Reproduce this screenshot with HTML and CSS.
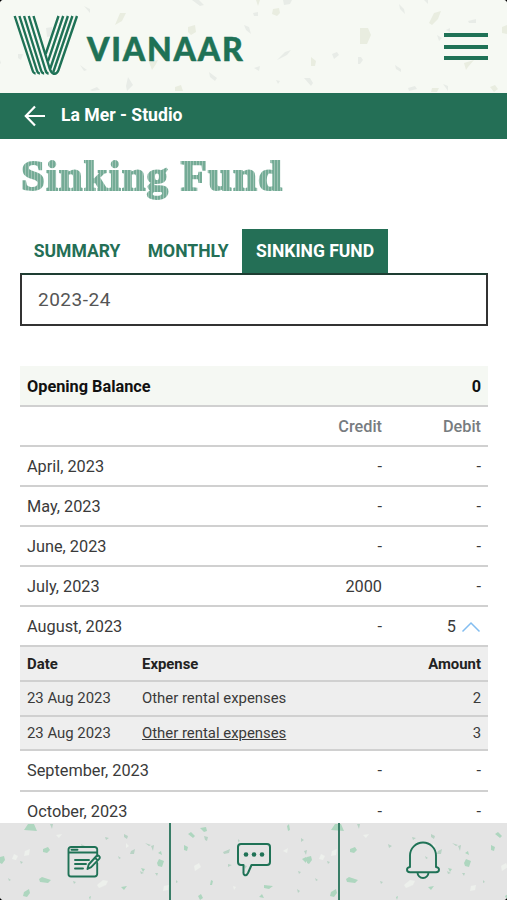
FILE: index.html
```
<!DOCTYPE html>
<html lang="en">
  <head>
    <meta charset="UTF-8">
    <meta name="viewport" content="width=device-width, initial-scale=1.0">
    <title>Vianaar - Sinking Fund</title>
    <link rel="stylesheet" href="styles.css">
  </head>
  <body>
    <div class="app">
      <header class="header">
        <svg class="speckles" width="507" height="93" viewBox="0 0 507 93">
          <g fill="#e9ede0">
            <path d="M120 13l6 0-4 8-7 4zM188 27l7-2 1 7-5 3-3-3zM149 62l9-2-2 4-4 6zM360 28h8l3 7-4 9h-7zM434 13l7-2-3 8-6 6-3-2zM464 63l10-3-6 7-2 3zM256 0h4l-2 6zM273 9l6-1 1 5-3 3-5-2zM311 57l5 4-1 5h-4zM175 87l6-2 2 6h-8zM432 88h7l-2 4h-6zM490 87l5-2 3 4-4 3zM502 27l5-2v9l-5-1z"/>
          </g>
          <g fill="#e8ece7">
            <path d="M84 6l6 3v4zM46 28l6-1v9l-5 1zM192 0h7l5 5-4 1zM244 25l5 2 2 7-5-4zM18 54l5 0-2 6-3-2zM80 65l7 5-3 1zM209 72l8 6-2 3-5-4zM90 90l7-3 3 3-8 1zM128 77l5 8-6 6-1-5zM123 50l5-1-1 5zM283 0h9l-2 4-6 1zM253 13l5-1v4h-4zM277 60l8-8 6-2-4 5zM332 54l5-2 2 3-5 4zM358 57h3l2 3-3 4h-2zM399 4l5 5 1 5-5-5zM424 0h4v4zM468 21l8-2v4h-7zM437 35l5 3-3 3zM446 30l4-2v4zM304 78h6l3 5-2 3zM276 80l4 1-2 3zM395 65l6 4v3l-5-3zM408 88l7-2 2 3-8 2zM443 84l5 2v5zM254 68l6-2-1 5zM0 60l1 3-1 1z"/>
          </g>
        </svg>
        <a class="brand" href="#">
          <svg class="brand-mark" width="66" height="62" viewBox="0 0 66 62" fill="none" stroke="#1f7256" stroke-width="2.4">
            <path d="M1.700 3L19.600 57.500q1 3 3 3M6.400 3l17.500 54.500q1 3 3 3M11.100 3l17 54.500q1 3 3 3M15.800 3l16.800 54.500q1 3 3 3M20.500 3L36.500 55q2 6 5.500 6"/>
            <path d="M45.500 3L32.700 41M50.200 3L35 48.300M54.900 3L37.300 55.500M59.400 3L40.300 59M64 3L45.500 57q-1.500 4-5 4"/>
          </svg>
          <span class="brand-name">VIANAAR</span>
        </a>
        <button class="menu-btn" aria-label="Menu">
          <span class="menu-line"></span>
          <span class="menu-line"></span>
          <span class="menu-line"></span>
        </button>
      </header>

      <div class="page-bar">
        <svg width="22" height="22" viewBox="0 0 22 22" fill="none" stroke="#fff" stroke-width="2.2">
          <path d="M21 11H2M11 1.500L1.800 11l9.200 9.500"/>
        </svg>
        <span class="page-bar__text">La Mer - Studio</span>
      </div>

      <main class="content">
        <h1 class="title">Sinking Fund</h1>
        <nav class="tabs">
          <a class="tab">SUMMARY</a>
          <a class="tab">MONTHLY</a>
          <a class="tab active">SINKING FUND</a>
        </nav>
        <div class="year-select">2023-24</div>

        <div class="table">
          <div class="row row-opening"><span>Opening Balance</span><span></span><span>0</span></div>
          <div class="row row-head"><span></span><span>Credit</span><span>Debit</span></div>
          <div class="row"><span>April, 2023</span><span>-</span><span>-</span></div>
          <div class="row"><span>May, 2023</span><span>-</span><span>-</span></div>
          <div class="row"><span>June, 2023</span><span>-</span><span>-</span></div>
          <div class="row"><span>July, 2023</span><span>2000</span><span>-</span></div>
          <div class="row">
            <span>August, 2023</span><span>-</span>
            <span class="open-cell">5
              <svg width="20" height="12" viewBox="0 0 20 12" fill="none" stroke="#83bdf0" stroke-width="1.500">
                <path d="M1.500 10.500L10 2l8.500 8.500"/>
              </svg>
            </span>
          </div>
          <div class="detail">
            <div class="detail-row detail-head"><span>Date</span><span>Expense</span><span>Amount</span></div>
            <div class="detail-row"><span>23 Aug 2023</span><span>Other rental expenses</span><span>2</span></div>
            <div class="detail-row"><span>23 Aug 2023</span><span><a class="link">Other rental expenses</a></span><span>3</span></div>
          </div>
          <div class="row"><span>September, 2023</span><span>-</span><span>-</span></div>
          <div class="row"><span>October, 2023</span><span>-</span><span>-</span></div>
        </div>
      </main>

      <footer class="footer">
        <svg class="speckles" width="507" height="77" viewBox="0 0 507 77">
          <defs>
            <pattern id="terrazzo" width="307" height="77" patternUnits="userSpaceOnUse">
              <g fill="#aed6bf">
                <path d="M24 7l4-6h6l3 7zM43 26l5-2 2 3-3 3-4-1zM39 56l3-2 9 3-3 3-8-1zM24 69l5-3 1 4-3 4-4-1zM0 34l4-1 1 4-3 4-2-1zM188 11l3-2 4 4-2 2zM184 22l4 2-1 4-3-1zM157 40l2-4 5 2-2 6-4-1zM141 45l4 1-2 3zM158 30l3-2 1 4zM211 57l2 1-1 4h-2zM264 62l9 1-4 3-5-1zM200 5l6-1 1 4-3 1zM302 36l4-2v6zM89 74l2-1-1 4zM198 73l3-2 2 4-3 2zM259 74l3-3 2 4zM121 64l6-1-3 4zM287 3l2-2 1 6-2 1zM304 36l3-2v5z"/>
              </g>
              <g fill="#b9d3c5">
                <path d="M50 1h3l-1 5zM105 14l4 1-3 2zM124 11l4 2-1 3-3-2zM81 21l4 2-3 2zM131 28l4-2-1 5-4 0zM20 38l3 1-2 2zM145 20l6 2-2 1zM151 23l3-1-1 6zM155 50l3 0-1 3zM176 57l2 2-2 1zM204 13l4 1-1 4-2-1zM223 29l7-3-1 4-5 1zM228 41l4 1-4 2zM73 58l3 1-2 2zM301 15l3 2-3 2zM304 28l3-1-1 5zM298 48l3 1-2 2zM244 42l3 1-2 3zM297 66l3 2-2 2zM238 16l2 2-2 1zM8 55l3 2-2 1zM118 33l3 2-2 1zM140 48l4 2-3 1z"/>
              </g>
              <g fill="#edf0ec">
                <path d="M56 12l6-1-3 4zM25 28l5-2-1 6-5 1zM97 62l6-5 5 1-2 4-7 3zM164 63l5-1-1 5-5 1zM194 43l5-3 2 4-6 4zM14 31l4 2-2 4-4-1zM126 20l3 3-3 2zM283 28l5-3-1 5zM233 63l3 1-2 3z"/>
              </g>
            </pattern>
          </defs>
          <rect width="507" height="77" fill="url(#terrazzo)"/>
        </svg>
        <a class="footer-item footer-item--notes">
          <svg width="34" height="34" viewBox="0 0 34 34" fill="none" stroke="#1f7256" stroke-width="1.900" stroke-linecap="round" stroke-linejoin="round">
            <path d="M30.200 11V4.500a2.500 2.500 0 0 0-2.500-2.500H4a2.500 2.500 0 0 0-2.500 2.500V29a2.500 2.500 0 0 0 2.500 2.500h23.700a2.500 2.500 0 0 0 2.500-2.500V18M1.500 7.500h28.700M4.500 4.700h6M8 15h14M8 19h11M8 23.500h8"/>
            <path d="M20.500 24l1.200-4.500L29.500 11q1.500-1 2.700.2t0 2.700l-8 8.300zM28 12.700l2.700 2.700"/>
          </svg>
        </a>
        <a class="footer-item">
          <svg width="36" height="36" viewBox="0 0 36 36" fill="none" stroke="#1f7256" stroke-width="2" stroke-linejoin="round">
            <path d="M5 2h26q3 0 3 3v15q0 3-3 3H15.500L12 31q-1.500 3-3.500 2-1.300-.6-1-3V23H5q-3 0-3-3V5q0-3 3-3z"/>
            <g fill="#1f7256" stroke="none"><circle cx="10" cy="12.500" r="2.300"/><circle cx="18" cy="12.500" r="2.300"/><circle cx="26" cy="12.500" r="2.300"/></g>
          </svg>
        </a>
        <a class="footer-item">
          <svg width="36" height="38" viewBox="0 0 36 38" fill="none" stroke="#1f7256" stroke-width="1.900" stroke-linejoin="round">
            <path d="M5 26V14.500a13 13 0 0 1 26 0V26q3 .4 3 2.700T31 31.200H5q-3-.2-3-2.500T5 26z"/>
            <path d="M12.500 31.500a5.500 5.500 0 0 0 11 0"/>
          </svg>
        </a>
      </footer>
    </div>
  </body>
</html>
```
FILE: styles.css
```
* {
  margin: 0;
  padding: 0;
  box-sizing: border-box;
}
html {
  background-color: #000;
}
body {
  font-family: Roboto, "Liberation Sans", sans-serif;
  color: #3a3a3a;
}
.app {
  display: flex;
  flex-direction: column;
  height: 900px;
  border-radius: 4px;
  background-color: #fff;
  overflow: hidden;
}
.header {
  position: relative;
  display: flex;
  flex: none;
  justify-content: space-between;
  align-items: flex-start;
  height: 93px;
  padding: 13px 19px 0 13px;
  background-color: #f6f9f3;
}
.speckles {
  position: absolute;
  left: 0;
  top: 0;
}
.brand {
  position: relative;
  display: flex;
  gap: 8px;
  text-decoration: none;
}
.brand-name {
  margin-top: 17px;
  font-family: Lato, sans-serif;
  font-size: 32px;
  font-weight: 900;
  line-height: 38px;
  letter-spacing: 1.8px;
  color: #1f7256;
  -webkit-text-stroke: 0.500px #1f7256;
}
.menu-btn {
  position: relative;
  display: flex;
  flex-direction: column;
  gap: 7.500px;
  width: 44px;
  margin-top: 20px;
  border: none;
  background: none;
}
.menu-line {
  height: 4px;
  background-color: #1f7256;
}
.page-bar {
  display: flex;
  flex: none;
  align-items: center;
  gap: 15px;
  height: 46px;
  padding-left: 24px;
  background-color: #246f56;
  color: #fff;
}
.page-bar__text {
  margin-top: -2px;
  font-size: 17.600px;
  font-weight: 700;
}
.content {
  flex: 1;
  min-height: 0;
  padding: 15px 19px 0 20px;
  overflow: hidden;
}
.title {
  width: max-content;
  padding: 0 2px 4px 1px;
  font-family: "Liberation Serif", serif;
  font-size: 43px;
  font-weight: 700;
  line-height: 44px;
  letter-spacing: 1px;
  color: transparent;
  background: repeating-linear-gradient(90deg, #74ab96 0, #74ab96 2px, #9dc3b4 2px, #9dc3b4 3px);
  -webkit-background-clip: text;
  background-clip: text;
  -webkit-text-stroke: 1.800px transparent;
}
.tabs {
  display: flex;
  margin-top: 27px;
}
.tab {
  height: 44px;
  padding: 0 13.700px;
  font-size: 17.550px;
  font-weight: 700;
  line-height: 44px;
  color: #246f56;
}
.tab.active {
  background-color: #246f56;
  color: #fff;
}
.year-select {
  height: 53px;
  padding-left: 16px;
  border: 2px solid #333;
  border-top-color: #1e3d32;
  font-size: 19px;
  line-height: 49px;
  letter-spacing: 0.500px;
  color: #555;
}
.table {
  margin-top: 40px;
  font-size: 16.300px;
}
.row {
  display: grid;
  grid-template-columns: 1fr 110px 99px;
  align-items: center;
  height: 40.100px;
  padding: 1px 7px 0;
  border-bottom: 2px solid #d0d0d0;
}
.row span:nth-child(n + 2),
.detail-row span:last-child {
  text-align: right;
}
.row-opening {
  height: 40.800px;
  padding-top: 2px;
  background-color: #f5f8f3;
  font-weight: 700;
  color: #111;
}
.row-head {
  font-weight: 500;
  color: #777c80;
}
.row .open-cell {
  display: flex;
  justify-content: flex-end;
  align-items: center;
  gap: 5px;
}
.detail {
  background-color: #eee;
  font-size: 14.900px;
}
.detail-row {
  display: grid;
  grid-template-columns: 115px 1fr 80px;
  align-items: center;
  height: 34.700px;
  padding: 0 7px;
  border-bottom: 2px solid #d0d0d0;
}
.detail-head {
  font-weight: 700;
  color: #222;
}
.link {
  text-decoration: underline;
}
.footer {
  position: relative;
  display: grid;
  grid-template-columns: 169px 169px 169px;
  flex: none;
  height: 77px;
  background-color: #e4e4e4;
}
.footer-item {
  position: relative;
  display: flex;
  justify-content: center;
  align-items: center;
  padding: 0 2px 4px 0;
}
.footer-item--notes {
  padding-bottom: 0;
}
.footer-item + .footer-item {
  border-left: 2px solid #397d67;
}
```
